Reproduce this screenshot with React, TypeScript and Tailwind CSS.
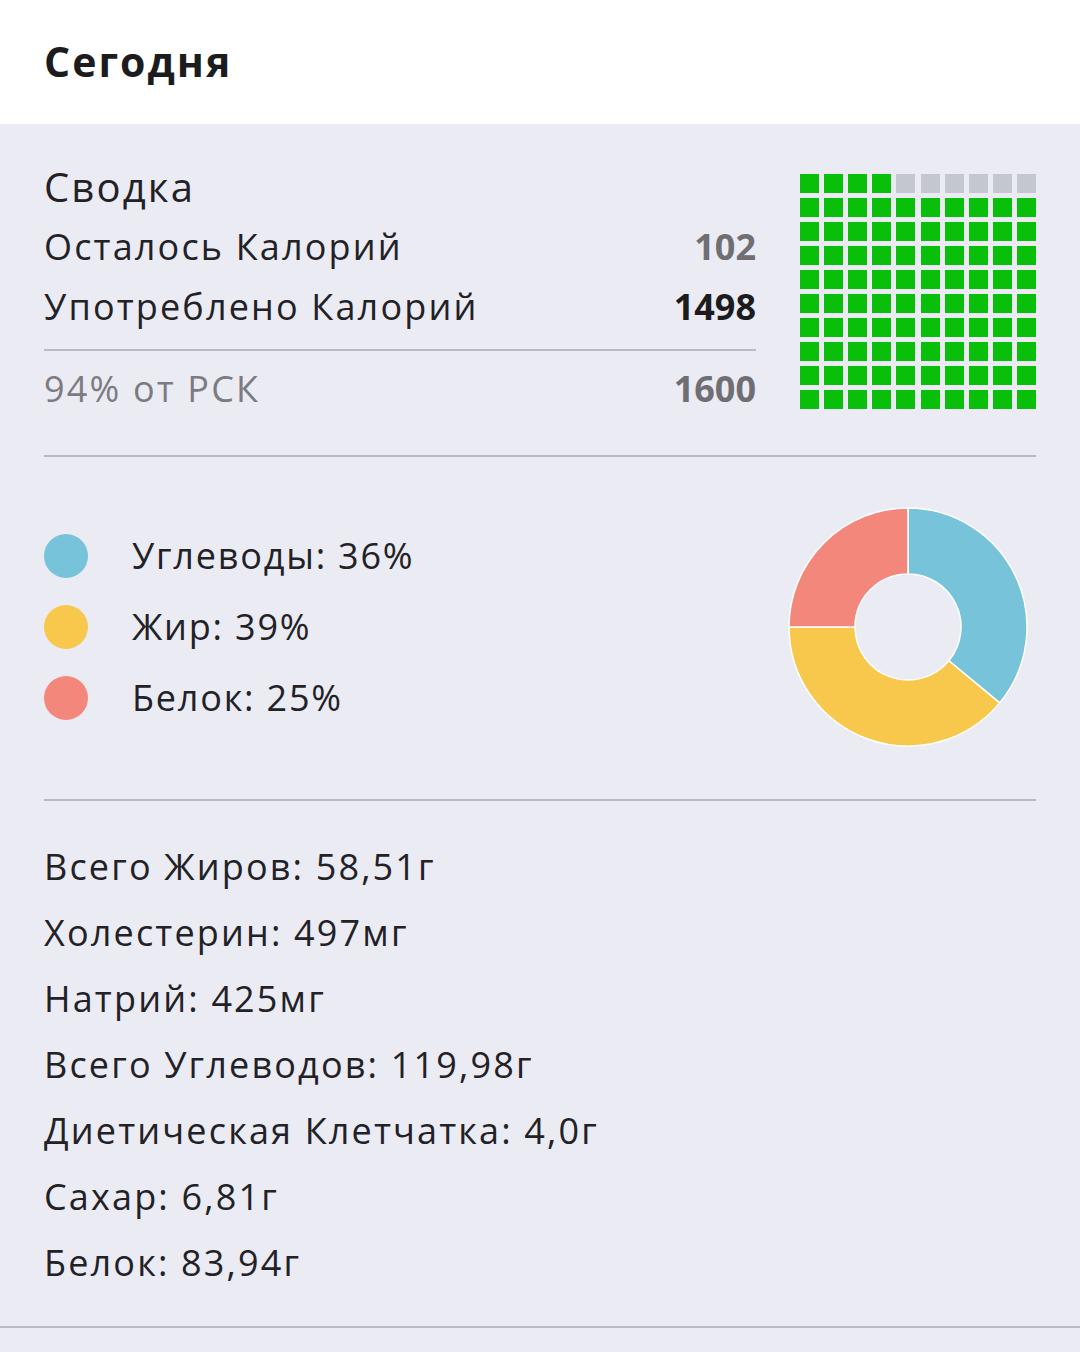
import React from 'react';

const FONT = { fontFamily: '"Open Sans", "Noto Sans", sans-serif' };

const macros = [
  { label: 'Углеводы', pct: 36, color: '#76c3da', dot: 'bg-[#76c3da]' },
  { label: 'Жир', pct: 39, color: '#f8c84c', dot: 'bg-[#f8c84c]' },
  { label: 'Белок', pct: 25, color: '#f4877c', dot: 'bg-[#f4877c]' },
];

const nutrients = [
  'Всего Жиров: 58,51г',
  'Холестерин: 497мг',
  'Натрий: 425мг',
  'Всего Углеводов: 119,98г',
  'Диетическая Клетчатка: 4,0г',
  'Сахар: 6,81г',
  'Белок: 83,94г',
];

// 94 of 100 filled, the empty ones sit at the end of the first row
const Waffle: React.FC<{ filled: number }> = ({ filled }) => {
  const empty = 100 - filled;
  return (
    <div className="grid grid-cols-10 gap-[5px] w-[236px] mt-[17px]">
      {Array.from({ length: 100 }).map((_, i) => {
        const isEmpty = i < 10 && i >= 10 - empty;
        return (
          <div
            key={i}
            className={`w-[19px] h-[19px] ${isEmpty ? 'bg-[#c4c6d0]' : 'bg-[#0abf0a]'}`}
          />
        );
      })}
    </div>
  );
};

const Donut: React.FC = () => {
  const cx = 120;
  const cy = 120;
  const R = 119;
  const r = 53;
  const pt = (rad: number, a: number) => {
    const t = (a * Math.PI) / 180;
    return [cx + rad * Math.sin(t), cy - rad * Math.cos(t)];
  };
  let start = 0;
  const paths = macros.map((m) => {
    const end = start + (m.pct / 100) * 360;
    const large = end - start > 180 ? 1 : 0;
    const [x1, y1] = pt(R, start);
    const [x2, y2] = pt(R, end);
    const [x3, y3] = pt(r, end);
    const [x4, y4] = pt(r, start);
    const d = `M ${x1} ${y1} A ${R} ${R} 0 ${large} 1 ${x2} ${y2} L ${x3} ${y3} A ${r} ${r} 0 ${large} 0 ${x4} ${y4} Z`;
    start = end;
    return <path key={m.label} d={d} fill={m.color} stroke="#ffffff" strokeWidth={1.5} />;
  });
  return (
    <svg width={240} height={240} viewBox="0 0 240 240">
      {paths}
    </svg>
  );
};

const App: React.FC = () => {
  return (
    <div className="w-[1080px] h-[1352px] bg-[#ebebf4] overflow-hidden" style={FONT}>
      {/* Header */}
      <div className="h-[124px] bg-white flex items-center px-[44px]">
        <h1 className="text-[41px] font-bold text-[#1c1c1e] tracking-[0.05em]">Сегодня</h1>
      </div>

      {/* Summary */}
      <div className="px-[44px]">
        <div className="flex items-start gap-[44px] pt-[33px]">
          <div className="flex-1 text-[36px] tracking-[0.06em] text-[#222226]">
            <div className="h-[60px] flex items-center text-[40px]">Сводка</div>
            <div className="h-[60px] flex items-center justify-between">
              <span>Осталось Калорий</span>
              <span className="font-bold text-[#6e6e73] tracking-normal">102</span>
            </div>
            <div className="h-[60px] flex items-center justify-between">
              <span>Употреблено Калорий</span>
              <span className="font-bold text-[#1c1c1e] tracking-normal">1498</span>
            </div>
            <div className="h-[2px] bg-[#b9bac3] mt-[12px]" />
            <div className="h-[76px] flex items-center justify-between text-[#7b7b80]">
              <span>94% от РСК</span>
              <span className="font-bold text-[#6e6e73] tracking-normal">1600</span>
            </div>
          </div>
          <Waffle filled={94} />
        </div>

        <div className="h-[2px] bg-[#b9bac3] mt-[28px]" />

        {/* Macros */}
        <div className="flex items-center justify-between pt-[50px] pb-[52px] pr-[8px]">
          <div className="flex flex-col">
            {macros.map((m) => (
              <div key={m.label} className="h-[71px] flex items-center">
                <span className={`w-[44px] h-[44px] rounded-full ${m.dot}`} />
                <span className="ml-[44px] text-[36px] tracking-[0.05em] text-[#222226]">
                  {m.label}: {m.pct}%
                </span>
              </div>
            ))}
          </div>
          <Donut />
        </div>

        <div className="h-[2px] bg-[#b9bac3]" />

        {/* Nutrients */}
        <div className="pt-[33px] text-[36px] tracking-[0.06em] text-[#222226]">
          {nutrients.map((n) => (
            <div key={n} className="h-[66px] flex items-center">
              {n}
            </div>
          ))}
        </div>
      </div>

      <div className="h-[2px] bg-[#b9bac3] mt-[30px]" />
    </div>
  );
};

export default App;
